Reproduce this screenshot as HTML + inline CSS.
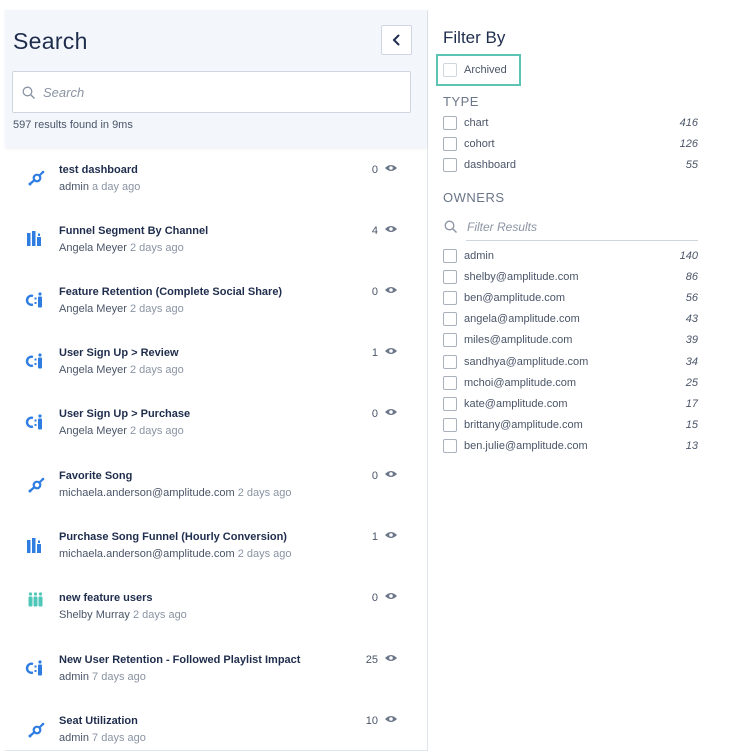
<!DOCTYPE html>
<html><head><meta charset="utf-8"><style>
*{margin:0;padding:0;box-sizing:border-box}
body{width:730px;height:756px;background:#fff;font-family:"Liberation Sans",sans-serif;position:relative;overflow:hidden;color:#1f2d4d}
.abs{position:absolute}
#left{left:5px;top:10px;width:423px;height:741px;border-right:1px solid #dfe3ea;border-bottom:1px solid #dfe3ea}
#hdr{left:5px;top:10px;width:422px;height:137px;background:#f3f7fb;box-shadow:0 2px 3px rgba(0,0,0,.06)}
h1{position:absolute;left:13px;top:28px;font-size:23px;font-weight:normal;color:#1f2d4d;letter-spacing:.3px}
.back{left:381px;top:25px;width:31px;height:30px;border:1px solid #cfd6df;background:#fff;border-radius:2px}
.sbox{left:12px;top:71px;width:399px;height:42px;border:1px solid #cfd6df;background:#fff;border-radius:2px}
.sbox span{position:absolute;left:30px;top:13px;font-style:italic;color:#8a94a3;font-size:13px}
.res{left:13px;top:119px;font-size:11px;color:#4a5568}
.t{position:absolute;left:59px;font-size:11px;font-weight:bold;color:#1f2d4d;margin-top:1px}
.s{position:absolute;left:59px;font-size:11px;color:#4a5568;margin-top:1px}
.s i{font-style:normal;color:#8a94a3}
.c{position:absolute;width:60px;text-align:right;font-size:11px;color:#4a5568;margin-top:1px}
.r{position:absolute;font-size:11px;color:#4a5568;margin-top:1px}
.cb{position:absolute;left:443px;width:14px;height:14px;border:1px solid #a9b1bd;border-radius:2px;background:#fff}
.n{position:absolute;right:32px;font-size:11px;font-style:italic;color:#4a5568;margin-top:1px}
.sec{position:absolute;left:443px;font-size:13px;color:#6b7688;letter-spacing:.5px;margin-top:1px}
</style></head><body>
<div id="left" class="abs"></div>
<div id="hdr" class="abs"></div>
<h1>Search</h1>
<div class="abs back"><svg width="29" height="28" viewBox="0 0 29 28"><path d="M16.5 9.5 L12 14 L16.5 18.5" stroke="#1f2d4d" stroke-width="2" fill="none" stroke-linecap="round"/></svg></div>
<div class="abs sbox"><svg class="abs" style="left:9px;top:14px" width="14" height="14" viewBox="0 0 14 14"><circle cx="5.5" cy="5.5" r="4.3" stroke="#8a94a3" stroke-width="1.3" fill="none"/><path d="M8.7 8.7 L12.5 12.5" stroke="#8a94a3" stroke-width="1.4"/></svg><span>Search</span></div>
<div class="abs res">597 results found in 9ms</div>

<div class="t" style="top:163px">test dashboard</div><div class="s" style="top:180px">admin <i>a day ago</i></div><div class="c" style="left:318px;top:163px">0</div>
<div class="t" style="top:224px">Funnel Segment By Channel</div><div class="s" style="top:241px">Angela Meyer <i>2 days ago</i></div><div class="c" style="left:318px;top:224px">4</div>
<div class="t" style="top:285px">Feature Retention (Complete Social Share)</div><div class="s" style="top:302px">Angela Meyer <i>2 days ago</i></div><div class="c" style="left:318px;top:285px">0</div>
<div class="t" style="top:346px">User Sign Up &gt; Review</div><div class="s" style="top:363px">Angela Meyer <i>2 days ago</i></div><div class="c" style="left:318px;top:346px">1</div>
<div class="t" style="top:407px">User Sign Up &gt; Purchase</div><div class="s" style="top:424px">Angela Meyer <i>2 days ago</i></div><div class="c" style="left:318px;top:407px">0</div>
<div class="t" style="top:469px">Favorite Song</div><div class="s" style="top:486px">michaela.anderson@amplitude.com <i>2 days ago</i></div><div class="c" style="left:318px;top:469px">0</div>
<div class="t" style="top:530px">Purchase Song Funnel (Hourly Conversion)</div><div class="s" style="top:547px">michaela.anderson@amplitude.com <i>2 days ago</i></div><div class="c" style="left:318px;top:530px">1</div>
<div class="t" style="top:591px">new feature users</div><div class="s" style="top:608px">Shelby Murray <i>2 days ago</i></div><div class="c" style="left:318px;top:591px">0</div>
<div class="t" style="top:653px">New User Retention - Followed Playlist Impact</div><div class="s" style="top:670px">admin <i>7 days ago</i></div><div class="c" style="left:318px;top:653px">25</div>
<div class="t" style="top:714px">Seat Utilization</div><div class="s" style="top:731px">admin <i>7 days ago</i></div><div class="c" style="left:318px;top:714px">10</div>

<svg class="abs" style="left:0;top:0" width="430" height="756">
<defs>
<g id="eye"><path d="M0 4 Q6 -2 12 4 Q6 10 0 4Z" fill="#6b7688"/><circle cx="6" cy="4" r="1.8" fill="#fff"/></g>
<g id="ds" fill="none" stroke="#2f7de1" stroke-width="2.2"><circle cx="9" cy="8" r="3.3"/><path d="M2 14 L6.5 10 M11.5 5.5 L14.5 2.5" stroke-linecap="round"/><circle cx="2" cy="14" r="1.5" fill="#2f7de1" stroke="none"/><circle cx="15" cy="2" r="1.3" fill="#2f7de1" stroke="none"/></g>
<g id="ch" fill="#2f7de1"><rect x="0" y="2" width="3.5" height="13"/><rect x="5" y="0" width="3.5" height="15"/><rect x="10" y="6" width="4" height="9"/><rect x="11" y="2.5" width="2" height="2.5"/></g>
<g id="co" fill="#2f7de1"><path d="M6 4 A4.5 4.5 0 1 0 6 12.5" stroke="#2f7de1" stroke-width="2.4" fill="none"/><rect x="7.5" y="5.5" width="2" height="2"/><rect x="7.5" y="10" width="2" height="2"/><circle cx="13" cy="2" r="1.6"/><rect x="11" y="4.5" width="4" height="11" rx="1"/></g>
<g id="pp" fill="#4fc7b8"><circle cx="2.5" cy="2" r="1.6"/><rect x="0.5" y="4.5" width="4" height="10" rx="1"/><circle cx="7.5" cy="2" r="1.6"/><rect x="5.5" y="4.5" width="4" height="10" rx="1"/><circle cx="12.5" cy="2" r="1.6"/><rect x="10.5" y="4.5" width="4" height="10" rx="1"/></g>
</defs>
<use href="#eye" x="385" y="164"/><use href="#eye" x="385" y="225"/><use href="#eye" x="385" y="286"/><use href="#eye" x="385" y="347"/><use href="#eye" x="385" y="408"/><use href="#eye" x="385" y="470"/><use href="#eye" x="385" y="531"/><use href="#eye" x="385" y="592"/><use href="#eye" x="385" y="654"/><use href="#eye" x="385" y="715"/>
<use href="#ds" x="28" y="170"/>
<use href="#ch" x="27" y="231"/>
<use href="#co" x="27" y="292"/>
<use href="#co" x="27" y="353"/>
<use href="#co" x="27" y="414"/>
<use href="#ds" x="28" y="477"/>
<use href="#ch" x="27" y="538"/>
<use href="#pp" x="28" y="592"/>
<use href="#co" x="27" y="660"/>
<use href="#ds" x="28" y="722"/>
</svg>

<div class="abs" style="left:443px;top:28px;font-size:17px;color:#1f2d4d">Filter By</div>
<div class="abs" style="left:436px;top:54px;width:85px;height:32px;border:2px solid #5bc4b5"></div>
<div class="cb" style="top:63px;border-color:#cfd6df"></div>
<div class="r" style="left:464px;top:63px">Archived</div>
<div class="sec" style="top:93px">TYPE</div>
<div class="cb" style="top:116px"></div><div class="r" style="left:464px;top:116px">chart</div><div class="n" style="top:116px">416</div>
<div class="cb" style="top:137px"></div><div class="r" style="left:464px;top:137px">cohort</div><div class="n" style="top:137px">126</div>
<div class="cb" style="top:158px"></div><div class="r" style="left:464px;top:158px">dashboard</div><div class="n" style="top:158px">55</div>
<div class="sec" style="top:189px">OWNERS</div>
<svg class="abs" style="left:444px;top:220px" width="14" height="14" viewBox="0 0 14 14"><circle cx="5.5" cy="5.5" r="4.3" stroke="#8a94a3" stroke-width="1.3" fill="none"/><path d="M8.7 8.7 L12.5 12.5" stroke="#8a94a3" stroke-width="1.4"/></svg>
<div class="abs" style="left:467px;top:220px;font-size:12px;font-style:italic;color:#8a94a3">Filter Results</div>
<div class="abs" style="left:466px;top:240px;width:232px;height:1px;background:#cfd6df"></div>
<div class="cb" style="top:249px"></div><div class="r" style="left:464px;top:249px">admin</div><div class="n" style="top:249px">140</div>
<div class="cb" style="top:270px"></div><div class="r" style="left:464px;top:270px">shelby@amplitude.com</div><div class="n" style="top:270px">86</div>
<div class="cb" style="top:291px"></div><div class="r" style="left:464px;top:291px">ben@amplitude.com</div><div class="n" style="top:291px">56</div>
<div class="cb" style="top:312px"></div><div class="r" style="left:464px;top:312px">angela@amplitude.com</div><div class="n" style="top:312px">43</div>
<div class="cb" style="top:333px"></div><div class="r" style="left:464px;top:333px">miles@amplitude.com</div><div class="n" style="top:333px">39</div>
<div class="cb" style="top:355px"></div><div class="r" style="left:464px;top:355px">sandhya@amplitude.com</div><div class="n" style="top:355px">34</div>
<div class="cb" style="top:376px"></div><div class="r" style="left:464px;top:376px">mchoi@amplitude.com</div><div class="n" style="top:376px">25</div>
<div class="cb" style="top:397px"></div><div class="r" style="left:464px;top:397px">kate@amplitude.com</div><div class="n" style="top:397px">17</div>
<div class="cb" style="top:418px"></div><div class="r" style="left:464px;top:418px">brittany@amplitude.com</div><div class="n" style="top:418px">15</div>
<div class="cb" style="top:439px"></div><div class="r" style="left:464px;top:439px">ben.julie@amplitude.com</div><div class="n" style="top:439px">13</div>
</body></html>
